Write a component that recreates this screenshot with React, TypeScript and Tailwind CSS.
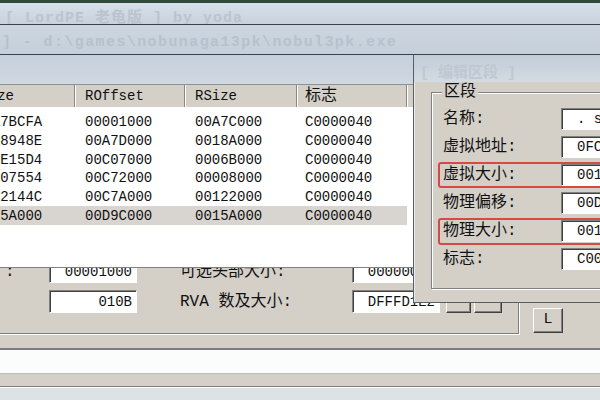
const font = "font-[family-name:'Liberation_Mono','Noto_Sans_CJK_SC',monospace]";

const rows = [
  ["00A7BCFA", "00001000", "00A7C000", "C0000040"],
  ["0018948E", "00A7D000", "0018A000", "C0000040"],
  ["000E15D4", "00C07000", "0006B000", "C0000040"],
  ["00007554", "00C72000", "00008000", "C0000040"],
  ["0012144C", "00C7A000", "00122000", "C0000040"],
  ["0015A000", "00D9C000", "0015A000", "C0000040"],
];

const sections = [
  { label: "名称:", value: ". sdata" },
  { label: "虚拟地址:", value: "0FC00000" },
  { label: "虚拟大小:", value: "0015A000" },
  { label: "物理偏移:", value: "00D9C000" },
  { label: "物理大小:", value: "0015A000" },
  { label: "标志:", value: "C0000040" },
];

// sunken edit box, classic windows look
function Field({ value, className }: { value?: string; className: string }) {
  return (
    <div
      className={`bg-white border border-[#808080] border-r-white border-b-white shadow-[inset_1px_1px_0_#404040] flex items-center text-[14px] text-[#111] leading-none whitespace-nowrap overflow-hidden ${className}`}
    >
      {value}
    </div>
  );
}

function RaisedButton({ label, className }: { label?: string; className: string }) {
  return (
    <div
      className={`bg-[#d4d0c8] border border-white border-r-[#404040] border-b-[#404040] shadow-[inset_-1px_-1px_0_#808080] flex items-center justify-center text-[15px] text-[#111] ${className}`}
    >
      {label}
    </div>
  );
}

export default function App() {
  return (
    <div className={`w-[600px] h-[400px] overflow-hidden relative bg-[#d4d0c8] flex flex-col ${font}`}>
      {/* top window strip */}
      <div className="h-[3px] bg-[#2d4a3b] shrink-0" />
      <div className="h-[21px] shrink-0 bg-linear-to-b from-[#d7dfe8] to-[#c9d2dd] pl-[5px] pt-[8px] text-[15px] font-bold tracking-[1px] leading-none text-[#bac4cf] whitespace-nowrap">
        [ LordPE 老龟版 ] by yoda
      </div>
      <div className="h-px bg-[#3b4249] shrink-0" />
      <div className="h-[29px] shrink-0 bg-linear-to-b from-[#cdd6e0] to-[#c5cfda] pl-[2px] pt-[10px] text-[15px] font-bold tracking-[1.4px] leading-none text-[#b7c1cc] whitespace-nowrap">
        ] - d:\games\nobunaga13pk\nobul3pk.exe
      </div>
      <div className="h-px bg-[#3b4249] shrink-0" />

      {/* section list window */}
      <div className="h-[29px] shrink-0 bg-linear-to-b from-[#c5d0dc] to-[#d0d8e1]" />
      <div className="h-[23px] shrink-0 flex ml-[-35px] bg-[#d4d0c8] border-t border-[#8c9196] border-b-[#808080] text-[14px] text-[#111] leading-none">
        <div className="w-[110px] pl-[7px] flex items-center border-r border-[#8a8680] shadow-[1px_0_0_#fff]">VSize</div>
        <div className="w-[110px] pl-[10px] flex items-center border-r border-[#8a8680] shadow-[1px_0_0_#fff]">ROffset</div>
        <div className="w-[112px] pl-[10px] flex items-center border-r border-[#8a8680] shadow-[1px_0_0_#fff]">RSize</div>
        <div className="w-[110px] pl-[8px] flex items-center border-r border-[#8a8680] shadow-[1px_0_0_#fff] text-[16px]">标志</div>
        <div className="flex-1" />
      </div>
      <div className="h-[161px] shrink-0 bg-white pt-[6px] border-b border-[#808080] ml-[-35px]">
        {rows.map((r, i) => (
          <div
            key={i}
            className={`h-[18.7px] w-[442px] flex items-center text-[14px] text-[#111] leading-none ${i === rows.length - 1 ? "bg-[#d8d5d0]" : ""}`}
          >
            <div className="w-[110px] pl-[10px]">{r[0]}</div>
            <div className="w-[110px] pl-[10px]">{r[1]}</div>
            <div className="w-[112px] pl-[10px]">{r[2]}</div>
            <div className="w-[110px] pl-[8px]">{r[3]}</div>
          </div>
        ))}
      </div>

      {/* header fields below the list */}
      <div className="h-[77px] shrink-0 overflow-hidden flex items-start">
        <div className="w-[521px] h-[66px] ml-[-2px] border-r border-b border-[#808080] shadow-[1px_1px_0_#fff] flex flex-col gap-[7px]">
          <div className="h-[23px] mt-[-8px] flex items-center text-[16px] text-[#111]">
            <span className="w-[51px] pl-[7px]">:</span>
            <Field value="00001000" className="w-[88px] h-[23px] justify-end pr-[4px]" />
            <span className="ml-[43px] w-[172px]">可选头部大小:</span>
            <Field value="000000E0" className="w-[88px] h-[23px] justify-end pr-[4px]" />
          </div>
          <div className="h-[23px] flex items-center text-[16px] text-[#111]">
            <span className="w-[51px]" />
            <Field value="010B" className="w-[88px] h-[23px] justify-end pr-[4px]" />
            <span className="ml-[43px] w-[172px]">RVA 数及大小:</span>
            <Field value="DFFFD1E2" className="w-[88px] h-[23px] justify-end pr-[4px]" />
            <RaisedButton className="ml-[6px] w-[25px] h-[23px]" />
            <RaisedButton className="ml-[3px] w-[28px] h-[23px]" />
          </div>
        </div>
        <RaisedButton label="L" className="ml-[14px] mt-[40px] w-[30px] h-[25px]" />
      </div>

      {/* status bar */}
      <div className="h-[3px] shrink-0" />
      <div className="h-[2px] shrink-0 bg-[#7a7c7e]" />
      <div className="h-[23px] shrink-0 bg-[#fbfcfc]" />
      <div className="h-px shrink-0 bg-[#bdbdbd]" />
      <div className="h-[12px] shrink-0 bg-[#d4d0c8]" />
      <div className="h-px shrink-0 bg-[#7f7f7f]" />
      <div className="h-px shrink-0 bg-white" />
      <div className="flex-1 bg-[#dde2e6]" />

      {/* edit section dialog, on top of the main window */}
      <div className="absolute left-[413px] top-[55px] w-[190px] h-[248px] bg-[#d4d0c8] border-l border-b border-[#565e66] shadow-[inset_1px_0_0_#e8ecef] flex flex-col">
        <div className="h-[27px] shrink-0 bg-linear-to-b from-[#c2cdd8] to-[#d3dae2] pl-[6px] pt-[11px] text-[15px] font-bold leading-none text-[#bfc8d2] whitespace-nowrap">
          [ 编辑区段 ]
        </div>
        <div className="pt-[10px] pl-[17px]">
          <div className="relative h-[197px] w-[200px] border border-[#808080] shadow-[inset_1px_1px_0_#fff,1px_1px_0_#fff] pt-[12px]">
            <span className="absolute left-[10px] top-[-11px] px-[2px] bg-[#d4d0c8] text-[16px] leading-[20px] text-[#111]">
              区段
            </span>
            {sections.map((s) => (
              <div key={s.label} className="h-[28px] flex items-center">
                <span className="w-[129px] pl-[11px] text-[16px] text-[#111] whitespace-nowrap">{s.label}</span>
                <Field value={s.value} className="w-[60px] h-[22px] pl-[15px]" />
              </div>
            ))}
          </div>
        </div>
        {/* red highlight marks */}
        <div className="absolute left-[24px] top-[107px] w-[200px] h-[26px] border-2 border-[#cf4d46] rounded-[3px]" />
        <div className="absolute left-[24px] top-[163px] w-[200px] h-[27px] border-2 border-[#cf4d46] rounded-[3px]" />
      </div>
    </div>
  );
}
